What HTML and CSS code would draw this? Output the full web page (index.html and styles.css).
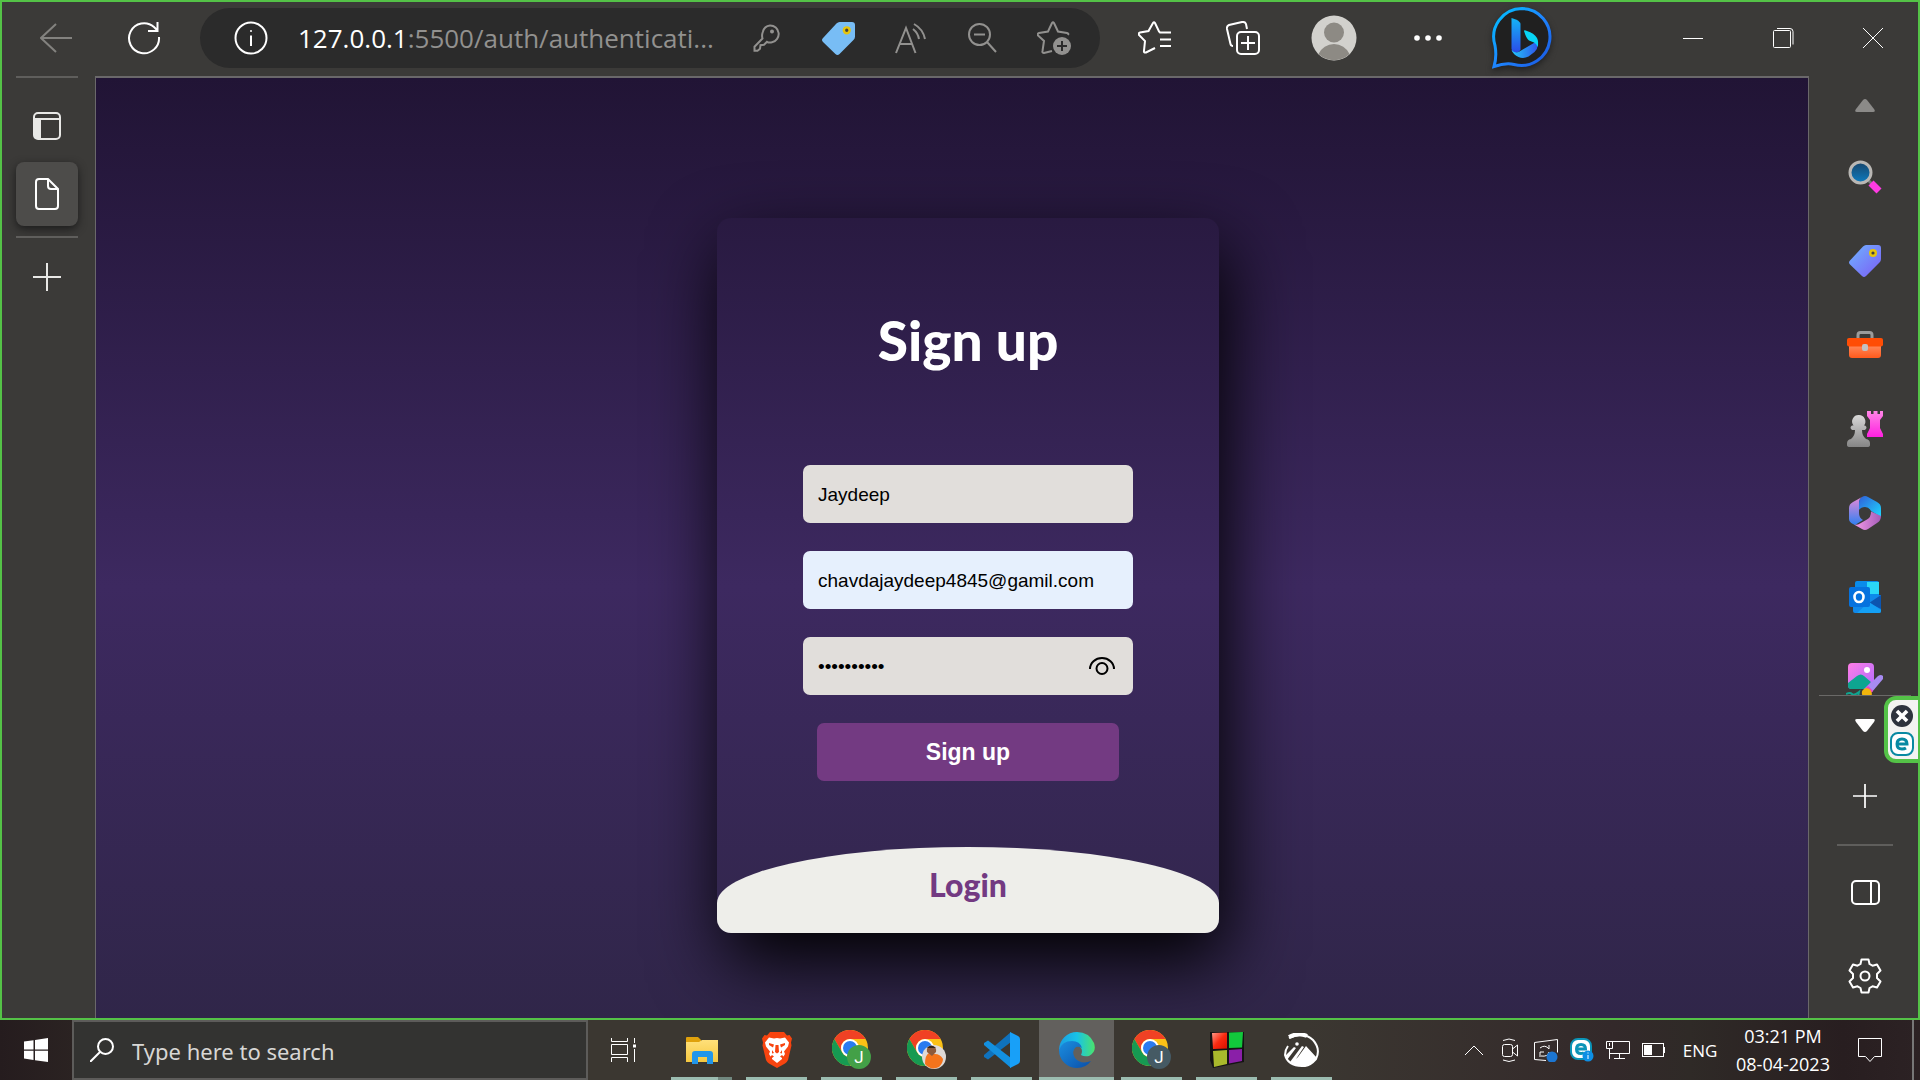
FILE: index.html
```html
<!DOCTYPE html>
<html lang="en">
<head>
<meta charset="utf-8">
<title>Sign up</title>
<link rel="stylesheet" href="styles.css">
</head>
<body>
<svg class="defs" aria-hidden="true">
  <defs>
    <linearGradient id="g-tag" x1="0" y1="0" x2="1" y2="1"><stop offset="0" stop-color="#6fb4ff"/><stop offset="1" stop-color="#7b5cf5"/></linearGradient>
    <linearGradient id="g-bing" x1="0" y1="0" x2="1" y2="1"><stop offset="0" stop-color="#00c3ff"/><stop offset=".5" stop-color="#1e86ff"/><stop offset="1" stop-color="#1a55e0"/></linearGradient>
    <linearGradient id="g-b1" x1="0" y1="0" x2="0" y2="1"><stop offset="0" stop-color="#14b5f5"/><stop offset="1" stop-color="#2b4ae8"/></linearGradient>
    <linearGradient id="g-b2" x1="0" y1="0" x2="1" y2="0"><stop offset="0" stop-color="#22c8fa"/><stop offset="1" stop-color="#2f55ea"/></linearGradient>
    <linearGradient id="g-glass" x1="0" y1="0" x2="0" y2="1"><stop offset="0" stop-color="#17456b"/><stop offset="1" stop-color="#0d7cc0"/></linearGradient>
    <linearGradient id="g-grey" x1="0" y1="0" x2="0" y2="1"><stop offset="0" stop-color="#d8d8d8"/><stop offset="1" stop-color="#858585"/></linearGradient>
    <linearGradient id="g-pink" x1="0" y1="0" x2="0" y2="1"><stop offset="0" stop-color="#ff86e6"/><stop offset="1" stop-color="#ff1fe0"/></linearGradient>
    <linearGradient id="g-box" x1="0" y1="0" x2="0" y2="1"><stop offset="0" stop-color="#ff8a5c"/><stop offset="1" stop-color="#ff5a1c"/></linearGradient>
    <linearGradient id="g-m1" x1="0" y1="0" x2="0" y2="1"><stop offset="0" stop-color="#e58ad8"/><stop offset="1" stop-color="#2f7ff0"/></linearGradient>
    <linearGradient id="g-m2" x1="0" y1="0" x2="1" y2="1"><stop offset="0" stop-color="#2f5fd8"/><stop offset="1" stop-color="#1fd8ff"/></linearGradient>
    <linearGradient id="g-m3" x1="0" y1="0" x2="1" y2="0"><stop offset="0" stop-color="#f59ae8"/><stop offset="1" stop-color="#a45cb8"/></linearGradient>
    <linearGradient id="g-pic" x1="0" y1="0" x2="1" y2="1"><stop offset="0" stop-color="#ff7de6"/><stop offset="1" stop-color="#b06cff"/></linearGradient>
    <linearGradient id="g-edge1" x1="0" y1="0" x2="1" y2="0"><stop offset="0" stop-color="#1b9de2"/><stop offset=".5" stop-color="#18c3e8"/><stop offset="1" stop-color="#4be36c"/></linearGradient>
    <linearGradient id="g-edge2" x1="0" y1="0" x2="1" y2="1"><stop offset="0" stop-color="#1b8ee0"/><stop offset="1" stop-color="#0b4fa8"/></linearGradient>
    <linearGradient id="g-fold" x1="0" y1="0" x2="0" y2="1"><stop offset="0" stop-color="#ffe07a"/><stop offset="1" stop-color="#f5c840"/></linearGradient>
    <linearGradient id="g-red" x1="0" y1="0" x2="1" y2="1"><stop offset="0" stop-color="#ff9a8a"/><stop offset=".5" stop-color="#fa2a10"/><stop offset="1" stop-color="#d81000"/></linearGradient>
    <symbol id="chrome" viewBox="0 0 36 36">
      <circle cx="18" cy="18" r="18" fill="#fbc116"/>
      <path d="M2.400 9A18 18 0 0 1 33.600 9H18a9 9 0 0 0-7.800 13.500Z" fill="#f04124"/>
      <path d="M2.400 9A18 18 0 0 0 18 36l7.800-13.500a9 9 0 0 1-15.600 0Z" fill="#169a52"/>
      <circle cx="18" cy="18" r="9" fill="#fff"/><circle cx="18" cy="18" r="7" fill="#2a7bf0"/>
    </symbol>
    <symbol id="tag" viewBox="0 0 32 32">
      <path d="M17 0h12a3 3 0 0 1 3 3v11q0 2-1.500 3.500L17 31q-2 2-4 0L1 19.500q-2-2 0-4L14 1.500Q15.500 0 17 0Z"/>
      <circle cx="24" cy="8" r="2.800" fill="#404040" stroke="#e5c40c" stroke-width="2.400"/>
    </symbol>
    <symbol id="plus" viewBox="0 0 28 28"><path d="M14 0v28M0 14h28" fill="none" stroke="currentColor" stroke-width="2"/></symbol>
  </defs>
</svg>

<div class="browser">
  <header class="toolbar">
    <nav class="nav">
      <button class="tool muted" aria-label="Back"><svg width="32" height="30" viewBox="0 0 32 30"><path d="M32 15H1M16 1 1 15l15 14"/></svg></button>
      <button class="tool" aria-label="Refresh"><svg width="34" height="34" viewBox="0 0 34 34"><path d="M32 16A15 15 0 1 1 27 6l3 3M30.500 1v9H21"/></svg></button>
    </nav>
    <div class="address">
      <svg class="info" width="34" height="34" viewBox="0 0 34 34"><circle cx="17" cy="17" r="15.500"/><path d="M17 14.500V25"/><circle class="solid" cx="17" cy="10" r="1"/></svg>
      <div class="url"><span class="host">127.0.0.1</span>:5500/auth/authenticati...</div>
      <div class="actions">
        <button class="tool muted" aria-label="Passwords"><svg width="27" height="28" viewBox="0 0 27 28"><path d="M17 1.500a8.500 8.500 0 0 1 2 16.800q-3 .7-5-.5l-3 3-3.500.4-.5 3.500-2.500 2H1.500v-4l8-8.200q-1-3 .3-6.500A8.500 8.500 0 0 1 17 1.500Z"/><circle cx="19" cy="7.500" r="1"/></svg></button>
        <button class="tool" aria-label="Shopping"><svg class="blue-tag" width="33" height="33"><use href="#tag"/></svg></button>
        <button class="tool muted" aria-label="Read aloud"><svg width="31" height="31" viewBox="0 0 31 31"><path d="m1 30 10-25 9.500 25M4.500 21h13M18 6q5 4 6 10M19 1q9 5 11 15"/></svg></button>
        <button class="tool muted" aria-label="Zoom out"><svg width="29" height="30" viewBox="0 0 29 30"><circle cx="11.500" cy="11.500" r="10.500"/><path d="M6 11.500h11M19 19l9 10"/></svg></button>
        <button class="tool muted" aria-label="Add to favourites"><svg width="34" height="34" viewBox="0 0 34 34"><path d="m15 30-8 2q-2 0-1.500-2L7 20l-6-5.500q-1-2 1-2.500l9-1.500L15 2q1-1.500 2 0l4 8.500 9 1.500q2 .5 1 2"/><circle class="solid" cx="25" cy="25" r="9"/><path class="cut" d="M25 20v10M20 25h10"/></svg></button>
      </div>
    </div>
    <div class="side-tools">
      <button class="tool" aria-label="Favourites"><svg width="34" height="34" viewBox="0 0 34 34"><path d="m17 27-9 4.500q-2.500.5-2-2L7 20l-6-6q-1-2 1-2.500l8.500-1.500L15 2q1-1.500 2 0l4 8.500 1 1H33M22 18.500h11M22 25h11"/></svg></button>
      <button class="tool" aria-label="Collections"><svg width="34" height="34" viewBox="0 0 34 34"><path d="M7 25q-2 0-2.500-2L1 8q-.5-3 2-4l13-3q3-.5 4 2l1 5"/><rect x="11" y="11" width="22" height="22" rx="4"/><path d="M22 15v14M15 22h14"/></svg></button>
    </div>
    <div class="profile-tools">
      <button class="tool" aria-label="Profile"><svg width="46" height="46" viewBox="0 0 46 46"><circle cx="23" cy="23" r="22.500" fill="#d2d1cd" stroke="none"/><circle cx="23" cy="17.500" r="10" fill="#8d8a84" stroke="none"/><path d="M7.500 39a17 17 0 0 1 31 0A22.500 22.500 0 0 1 7.500 39Z" fill="#8d8a84" stroke="none"/></svg></button>
      <button class="tool" aria-label="Settings and more"><svg width="28" height="6" viewBox="0 0 28 6"><circle class="solid" cx="3" cy="3" r="2.800"/><circle class="solid" cx="14" cy="3" r="2.800"/><circle class="solid" cx="25" cy="3" r="2.800"/></svg></button>
      <button class="tool" aria-label="Bing chat"><svg class="bing" width="60" height="62" viewBox="0 0 60 62"><path d="M30 1.500a28.500 28.500 0 1 1-8 56q-8-2-20 2 3-10 1-21A28.500 28.500 0 0 1 30 1.500Z" fill="#202020" stroke="url(#g-bing)" stroke-width="3"/><path d="M19.500 11q4 1 6.500 2.500 2.500 2 2.500 4V43q-3 4-7 2.500-2-1.500-2-4Z" fill="url(#g-b1)" stroke="none"/><path d="M19.500 43q3 3.500 7 2l18-10.500q3 6-2 10.500l-6 4.500q-5 2.500-10 .5-5-2-7-7Z" fill="url(#g-b2)" stroke="none"/><path d="M32 24q0-1.500 3 0 7 2 10 7 2 4 .5 9-.5-3-3.500-4.500l-5-2q-2.500-1.500-5-9.500Z" fill="#08d5f5" stroke="none"/></svg></button>
    </div>
    <div class="window-tools">
      <button class="tool" aria-label="Minimise"><svg width="20" height="1" viewBox="0 0 20 1"><path class="solid" d="M0 0h20v1H0z"/></svg></button>
      <button class="tool" aria-label="Restore"><svg width="21" height="21" viewBox="0 0 21 21"><rect x=".5" y="2.500" width="17" height="17" rx="1"/><path d="M4 .5h13q3 0 3 3v13"/></svg></button>
      <button class="tool" aria-label="Close"><svg width="20" height="20" viewBox="0 0 20 20"><path d="m0 0 20 20M20 0 0 20"/></svg></button>
    </div>
  </header>

  <div class="workspace">
    <aside class="tabs">
      <hr>
      <button class="tab" aria-label="Tab actions"><svg width="28" height="28" viewBox="0 0 28 28"><rect x="1" y="1" width="26" height="26" rx="4"/><path class="solid" d="M1 7h7v20H4q-3 0-3-3Z"/><path d="M1 7h26"/></svg></button>
      <button class="tab active" aria-label="Sign up tab"><svg width="24" height="32" viewBox="0 0 24 32"><path d="M4 1h9l10 10v17q0 3-3 3H4q-3 0-3-3V4q0-3 3-3ZM13 1v7q0 3 3 3h7"/></svg></button>
      <hr>
      <button class="tab" aria-label="New tab"><svg width="28" height="28"><use href="#plus"/></svg></button>
    </aside>

    <main class="page">
      <section class="card">
        <form class="signup">
          <h1>Sign up</h1>
          <input class="field" type="text" aria-label="User name" value="Jaydeep">
          <input class="field filled" type="email" aria-label="Email" value="chavdajaydeep4845@gamil.com">
          <div class="password">
            <input class="field" type="password" aria-label="Password" value="jaydeep123">
            <button class="reveal" type="button" aria-label="Show password"><svg width="26" height="18" viewBox="0 0 26 18"><path d="M1 12a12 11 0 0 1 24 0"/><circle cx="13" cy="11.500" r="5.500"/></svg></button>
          </div>
          <button class="submit" type="button">Sign up</button>
        </form>
        <div class="login"><button class="login-toggle" type="button">Login</button></div>
      </section>
    </main>

    <aside class="apps">
      <button class="scroll up" aria-label="Scroll up"><svg width="20" height="13" viewBox="0 0 20 13"><path class="solid" d="M10 0q1 0 2 1l7 9q2 3-1 3H2q-3 0-1-3l7-9q1-1 2-1Z"/></svg></button>
      <div class="app-list">
        <button aria-label="Search"><svg width="34" height="34" viewBox="0 0 34 34"><path d="m20 20 4 4" stroke="#777" stroke-width="3"/><circle cx="12.500" cy="12.500" r="10.500" fill="url(#g-glass)" stroke="#b9b7b4" stroke-width="3"/><path d="m23 23 8 8" stroke="#ff3be3" stroke-width="7"/></svg></button>
        <button aria-label="Shopping"><svg width="32" height="32" fill="url(#g-tag)"><use href="#tag"/></svg></button>
        <button aria-label="Tools"><svg width="36" height="28" viewBox="0 0 36 28"><path d="M11 8V4q0-2.500 2.500-2.500h9Q25 1.500 25 4v4" fill="none" stroke="#9b9b9b" stroke-width="3"/><path d="M2 14h32v10q0 3-3 3H5q-3 0-3-3Z" fill="url(#g-box)"/><rect y="7" width="36" height="8.500" rx="2" fill="#ff4d05"/><rect x="15" y="13" width="6" height="7" rx="2" fill="#c2c2c2"/></svg></button>
        <button aria-label="Games"><svg width="36" height="36" viewBox="0 0 36 36"><path d="M20 0h4v3h2.500V0h4v3H33V0h3v5l-3 4v8l3 6v3H20v-3l3-6V9l-3-4Z" fill="url(#g-pink)"/><path d="M12 4a6.500 6.500 0 0 1 5 10.500h1q3 2 0 4.500h-3q0 6 4 9 4 .5 4 4.500v1.500q0 2-3 2H3q-3 0-3-2v-1.500Q0 28.500 4 28q4-3 4-9H5q-3-2.500 0-4.500h1.500A6.500 6.500 0 0 1 12 4Z" fill="url(#g-grey)"/></svg></button>
        <button aria-label="Microsoft 365"><svg width="32" height="36" viewBox="0 0 32 36"><path d="M13 2 4 7Q0 9 0 13v11q0 3 4 5l2 1 8-5q-4-2-4-7V8q0-4 3-6Z" fill="url(#g-m1)"/><path d="M13 2q3-2 6 0l9 5q4 2 4 6v9l-10-6q-2-4-6-4t-6 3V8q0-4 3-6Z" fill="url(#g-m2)"/><path d="M32 21q0 5-4 7l-9 6q-3 2-6 0l-8-4.500q3 1 6-1l7-4q4-2 4-8Z" fill="url(#g-m3)"/></svg></button>
        <button aria-label="Outlook"><svg width="32" height="32" viewBox="0 0 32 32"><path d="M8 0h20q2 0 2 2v14H6V2q0-2 2-2Z" fill="#0a8ceb"/><path d="M18 1h12v12H18Z" fill="#2ad8f8"/><path d="M4 16l28-2v16q0 2-2 2H6q-2 0-2-2Z" fill="#1089ea"/><path d="M20 22 32 14v14Z" fill="#0c55b0"/><path d="m20 21 12 8v1q0 2-2 2H8Z" fill="#14a0f5"/><rect y="6" width="21" height="20" rx="2" fill="#0672de"/><ellipse cx="10" cy="16" rx="4.500" ry="5" fill="none" stroke="#fff" stroke-width="2.600"/></svg></button>
        <button aria-label="Drop"><svg width="38" height="38" viewBox="0 0 38 38"><rect x="2" y="1" width="26" height="26" rx="4" fill="url(#g-pic)"/><circle cx="21" cy="8" r="3" fill="#fff"/><path d="M2 21 11 14q4-3 7 0l7 6-7 7H5q-3 0-3-3Z" fill="#0ea590"/><path d="M0 32q4-2 6 0t7-2l-1 5" fill="none" stroke="#0ea590" stroke-width="2"/><path d="m21 25 11-11q3-2 5 0v3L26 30Z" fill="#a78bf2"/><path d="m22 24 5 5-3 3-5-5Z" fill="#f23fc0"/><path d="M20 26q5 0 6 6-2 6-11 6 2-2 1-6t4-6Z" fill="#f2b50c"/></svg></button>
      </div>
      <button class="scroll down" aria-label="Scroll down"><svg width="20" height="13" viewBox="0 0 20 13"><path class="solid" d="M10 13q-1 0-2-1L1 3q-2-3 1-3h16q3 0 1 3l-7 9q-1 1-2 1Z"/></svg></button>
      <button class="side-action" aria-label="Customise"><svg width="24" height="24"><use href="#plus"/></svg></button>
      <hr>
      <button class="side-action" aria-label="Hide sidebar"><svg width="29" height="25" viewBox="0 0 29 25"><rect x="1" y="1" width="27" height="23" rx="4"/><path d="M20 1v23"/></svg></button>
      <button class="side-action" aria-label="Settings"><svg width="34" height="36" viewBox="0 0 34 36"><circle cx="17" cy="18" r="4.500"/><path d="M13.500 1.500h7l1 4.500 3 1.700 4.500-1.200 3.500 6-3.500 3.500v4l3.500 3.500-3.500 6-4.500-1.200-3 1.700-1 4.500h-7l-1-4.500-3-1.700L5 29.500l-3.500-6L5 20v-4l-3.500-3.500 3.500-6 4.500 1.200 3-1.700Z" stroke-linejoin="round"/></svg></button>
    </aside>
  </div>

  <div class="safe-badge">
    <svg width="22" height="22" viewBox="0 0 24 24"><circle cx="12" cy="12" r="12" fill="#2e333d"/><path d="m6.500 6.500 11 11m0-11-11 11" stroke="#fff" stroke-width="4"/></svg>
    <svg width="24" height="24" viewBox="0 0 24 24"><rect x="1" y="1" width="22" height="22" rx="7" fill="#fff" stroke="#0889a2" stroke-width="2"/><path d="M7 12h10q0-5-5-5t-5 5 5 5q2.500 0 4-1" fill="none" stroke="#0889a2" stroke-width="3"/></svg>
  </div>
</div>

<footer class="taskbar">
  <button class="start" aria-label="Start"><svg width="24" height="24" viewBox="0 0 24 24"><path fill="#fff" d="m0 3.500 9.500-1.300v9.300H0Zm11-1.500L24 0v11.500H11ZM0 12.800h9.500v9.100L0 20.500Zm11 0h13V24l-13-1.800Z"/></svg></button>
  <label class="search">
    <svg width="24" height="24" viewBox="0 0 24 24"><circle cx="15.500" cy="8.500" r="7.500"/><path d="M10 14 0 24"/></svg>
    <input type="text" placeholder="Type here to search">
  </label>
  <button class="task-view" aria-label="Task view"><svg width="26" height="24" viewBox="0 0 26 24"><path d="M.5 0v3.500h16V0M.5 24v-4.500h16V24M.5 6.500h16v10H.5ZM23.500 0v5M23.500 11v13"/><path class="solid" d="M22 6.500h3v3h-3z"/></svg></button>
  <div class="running">
    <button class="task grouped" aria-label="File Explorer"><svg width="32" height="27" viewBox="0 0 32 27"><path d="M0 1q0-1 1-1h11l3 3v4H0Z" fill="#dfa10c"/><path d="M0 5h13l3-2h16v22H0Z" fill="url(#g-fold)"/><path d="M6 27V17q0-3 3-3h15q3 0 3 3v10h-6v-7h-9v7Z" fill="#2196ea"/></svg></button>
    <button class="task" aria-label="Brave"><svg width="30" height="36" viewBox="0 0 30 36"><path d="m8 0h14l3 3.500 2.500-.5L30 6.500l-1 4 .5 3L26 28q-1 2-3 3.500L15 36l-8-4.500Q5 30 4 28L.5 13.500l.5-3-1-4L2.500 3 5 3.500Z" fill="#f8440f"/><path d="m15 6 3 .5L23 5.500l4 5-1 4-4 5 1 2.500-1.500 2.500L20 23l-2 1.500 2 1.500v1l-5 4-5-4v-1l2-1.500L10 23l-1.500 1.500L7 22l1-2.500-4-5-1-4 4-5 5 1Z" fill="#fff"/><path d="m7 11 5 1.500-1 3L7 13ZM23 11l-5 1.500 1 3 4-2.500ZM13.500 13h3l.5 7-2 1.500-2-1.500ZM10 18l2 3-2 .5ZM20 18l-2 3 2 .5Z" fill="#f8440f"/></svg></button>
    <button class="task" aria-label="Chrome, profile J"><svg width="40" height="40" viewBox="0 0 40 40"><use href="#chrome" width="36" height="36"/><circle cx="27" cy="27" r="12" fill="#43a047"/><text class="badge" x="27" y="33">J</text></svg></button>
    <button class="task" aria-label="Chrome, second profile"><svg width="40" height="40" viewBox="0 0 40 40"><use href="#chrome" width="36" height="36"/><circle cx="27" cy="27" r="12" fill="#ded9d6"/><path d="M18 34q0-9 4-11l6 1q5 0 8 5 0 4-4 8-8 4-14-3Z" fill="#f5741c"/><path d="M20 22q-1-7 5-6 5 1 4 6l-4 4Z" fill="#8d5a3c"/><path d="M20 18q4-5 9 0Z" fill="#33241d"/></svg></button>
    <button class="task" aria-label="Visual Studio Code"><svg width="36" height="36" viewBox="0 0 36 36"><path d="M27 0v10L4 27.500 0 25v-2Z" fill="#0f72bd"/><path d="M0 13v-2l4-2.500L27 26v10Z" fill="#1390e0"/><path d="m26 0 8 4q2 1 2 3v22q0 2-2 3l-8 4Z" fill="#18a0f8"/></svg></button>
    <button class="task current" aria-label="Microsoft Edge"><svg width="36" height="36" viewBox="0 0 36 36"><path d="M0 18A18 18 0 0 1 18 0q12 0 17 11 3 9-5 13-5 1-8-1 2-4 0-7Q14 6 0 18Z" fill="url(#g-edge1)"/><path d="M0 18Q3 9 13 9q8 0 10 7-3-2-6-1-5 4-1 11 6 7 16 3-5 7-14 7A18 18 0 0 1 0 18Z" fill="url(#g-edge2)"/></svg></button>
    <button class="task" aria-label="Chrome, work profile"><svg width="40" height="40" viewBox="0 0 40 40"><use href="#chrome" width="36" height="36"/><circle cx="27" cy="27" r="12" fill="#455a64"/><text class="badge" x="27" y="33">J</text></svg></button>
    <button class="task" aria-label="Colour blocks"><svg width="34" height="36" viewBox="0 0 34 36"><path d="M0 0h34v30L3 36 0 28Z" fill="#141414"/><path d="m2 1 15-.5v16L3 17Z" fill="url(#g-red)"/><path d="M19 .5 33 0l-1 15.500-13 .5Z" fill="#12c83c"/><path d="m3 19 14-1v14L4 35Z" fill="#a9b92c"/><path d="m19 18 13-1v12l-13 2.500Z" fill="#8a1fa8"/></svg></button>
    <button class="task" aria-label="Image viewer"><svg width="36" height="34" viewBox="0 0 36 34"><path d="M5 5Q20-2 29 7q8 9 3 19-7 8-14 7-14 0-17-11 0-5 3-9" fill="none" stroke="#fff" stroke-width="2"/><path d="M5 4q9-5 18-1" fill="none" stroke="#fff" stroke-width="4"/><path d="m14 24 8-11 11 12q-6 8-15 8-8 0-12-4l12-16 2 1-8 12Z" fill="#fff"/><path d="m1 23 9-9 2 1-9 12Z" fill="#fff"/><circle cx="13" cy="11" r="1.800" fill="#fff"/></svg></button>
  </div>
  <div class="tray">
    <button aria-label="Show hidden icons"><svg width="20" height="11" viewBox="0 0 20 11"><path d="m1 10 9-9 9 9"/></svg></button>
    <button aria-label="Meet now"><svg width="18" height="24" viewBox="0 0 18 24"><rect x="1.500" y="6.500" width="10" height="12" rx="2"/><path d="m11.500 11 5-4v11l-5-4M2 2.500q6-3 12 0M2 22q6 3 12 0"/></svg></button>
    <button aria-label="Updates"><svg width="26" height="24" viewBox="0 0 26 24"><path d="M13 22.500 1.500 21.500v-17l23-3v13M7 10q5-4 9 1V7M7 19v-5h4M16 14q-1 5-8 4"/><circle cx="19" cy="19" r="5.500" fill="#1c76d2" stroke="none"/></svg></button>
    <button aria-label="Security"><svg width="24" height="24" viewBox="0 0 24 24"><rect x="1" y="1" width="20" height="20" rx="7" fill="#fff" stroke="#0b94b8" stroke-width="2"/><path d="M6.500 11h9q0-4.500-4.500-4.500T6.500 11t4.500 4.500q2 0 3-1" stroke="#0b94b8" stroke-width="3"/><circle cx="18" cy="18" r="5.500" fill="#0d8fe5" stroke="none"/><path d="M18 17v4M18 14.500v1"/></svg></button>
    <button aria-label="Network"><svg width="26" height="20" viewBox="0 0 26 20"><path d="M7 1.500h17.500v12H4M1.500 1.500h6v7h-6ZM4.500 9v10M14.500 14v4M9 18.500h11M4.500 3v3"/></svg></button>
    <button aria-label="Battery"><svg width="24" height="14" viewBox="0 0 24 14"><rect x=".5" y=".5" width="21" height="13"/><path class="solid" d="M2 2h8v10H2zM22 4h1v6h-1z"/></svg></button>
    <button class="language">ENG</button>
    <button class="clock"><span>03:21 PM</span><span>08-04-2023</span></button>
    <button class="notices" aria-label="Notifications"><svg width="26" height="24" viewBox="0 0 26 24"><path d="M1.500.5h23v18h-7l-4.500 5-4.500-5h-7Z"/></svg></button>
    <span class="desktop-edge"></span>
  </div>
</footer>
</body>
</html>
```

FILE: styles.css
```css
* { box-sizing: border-box; }

body {
  margin: 0;
  height: 100vh;
  display: flex;
  flex-direction: column;
  overflow: hidden;
  font-family: "Open Sans", "Noto Sans", sans-serif;
  color: #fff;
  background: #3b3a38;
}

.defs { position: absolute; width: 0; height: 0; }

button {
  margin: 0;
  padding: 0;
  border: 0;
  background: none;
  color: inherit;
  font: inherit;
  display: flex;
  align-items: center;
  justify-content: center;
}

svg { display: block; flex: none; }
hr { margin: 0; border: 0; height: 2px; background: #5f5e5c; flex: none; }
.solid { fill: currentColor; stroke: none; }

/* Browser window */
.browser {
  position: relative;
  flex: 1;
  min-height: 0;
  display: flex;
  flex-direction: column;
  border: 2px solid #54c247;
  background: #3b3a38;
}

.toolbar {
  display: flex;
  align-items: center;
  height: 74px;
  padding-bottom: 2px;
  flex: none;
}
.tool { height: 60px; }
.tool svg, .info, .task-view svg, .search svg, .tray svg, .tab svg, .side-action svg, .reveal svg {
  fill: none;
  stroke: currentColor;
  stroke-width: 2;
}
.tool svg .solid, .info .solid, .tray svg .solid, .tab svg .solid, .task-view svg .solid { fill: currentColor; stroke: none; }
.muted { color: #92918f; }
.cut { stroke: #2b2b2b; }

.nav, .side-tools, .profile-tools, .window-tools, .actions { display: flex; }
.nav { padding: 0 12px 0 10px; }
.nav .tool, .side-tools .tool { width: 88px; }
.nav .muted { color: #83827f; }
.side-tools { margin-left: 11px; }
.profile-tools .tool { width: 94px; }
.window-tools { margin-left: auto; }
.window-tools .tool { width: 90px; }
.window-tools .tool svg, .tray svg, .task-view svg { stroke-width: 1; }
.tool .blue-tag { fill: #78bdf5; stroke: none; }
.bing { filter: drop-shadow(0 3px 3px #222); }

.address {
  flex: 0 1 900px;
  min-width: 0;
  display: flex;
  align-items: center;
  height: 60px;
  padding: 0 10px 0 34px;
  border-radius: 30px;
  background: #2b2b2b;
}
.url {
  flex: 1;
  min-width: 0;
  margin-left: 30px;
  overflow: hidden;
  white-space: nowrap;
  font-size: 26px;
  line-height: 36px;
  color: #92918f;
}
.host { color: #fff; }
.actions .tool { width: 72px; }

.workspace {
  flex: 1;
  min-height: 0;
  display: grid;
  grid-template-columns: 93px minmax(0, 1fr) 109px;
  grid-template-rows: minmax(0, 1fr);
}

.tabs { display: flex; flex-direction: column; padding: 0 17px 0 14px; }
.tab { height: 64px; color: #e8e8e6; }
.tabs hr + .tab { margin-top: 16px; }
.tab + .tab { margin-top: 4px; }
.tab.active {
  margin-bottom: 10px;
  border-radius: 8px;
  background: #4d4c4a;
  color: #fff;
  box-shadow: 0 3px 8px #1c1c1c;
}
.tabs hr + .tab:last-child { margin-top: 7px; }

/* Web page */
.page {
  display: flex;
  justify-content: center;
  align-items: flex-start;
  padding: 140px 0 0 32px;
  overflow: hidden;
  border: 1px solid #6a686a;
  border-width: 2px 1px 0;
  background: linear-gradient(#211435, #3d2960 54%, #302649);
}
.card {
  width: 502px;
  overflow: hidden;
  border-radius: 14px;
  box-shadow: 7px 29px 72px #000;
}
.signup {
  display: flex;
  flex-direction: column;
  align-items: center;
  gap: 28px;
  padding: 86px 86px 66px;
}
h1 {
  margin: 0 0 61px;
  font: 900 55px/72px Lato, sans-serif;
}
.field {
  width: 100%;
  height: 58px;
  padding: 1px 15px 0;
  border: 0;
  border-radius: 7px;
  background: #e1dedb;
  color: #000;
  font: 19px "Liberation Sans", sans-serif;
}
.filled { background: #e6f0fd; }
.password { position: relative; width: 100%; display: flex; }
.password .field { padding-right: 60px; }
.reveal { position: absolute; right: 18px; top: 14px; height: 30px; color: #000; }
.submit {
  width: 302px;
  height: 58px;
  border-radius: 7px;
  background: #733a82;
  font: bold 23px "Liberation Sans", sans-serif;
}
.login {
  display: flex;
  justify-content: center;
  align-items: flex-start;
  height: 86px;
  padding-top: 18px;
  background: #eeeeea;
  border-radius: 50% 50% 0 0 / 56px 56px 0 0;
}
.login-toggle { color: #733a82; font: 900 32px/40px Lato, sans-serif; }

/* Right sidebar */
.apps { display: flex; flex-direction: column; align-items: center; padding-left: 3px; }
.apps button { width: 100%; flex: none; }
.up { height: 59px; color: #8b8a88; }
.app-list {
  flex: 1;
  min-height: 0;
  width: 92px;
  overflow: hidden;
  border-bottom: 1px solid #6a6967;
}
.app-list button { height: 84px; }
.down { height: 58px; }
.side-action { height: 84px; }
.apps hr { width: 56px; margin: 6px 0 4px; }

.safe-badge {
  position: absolute;
  right: -2px;
  top: 694px;
  display: flex;
  flex-direction: column;
  align-items: center;
  gap: 5px;
  padding: 5px 4px 3px 2px;
  border: 4px solid #54c247;
  border-right-width: 2px;
  border-radius: 12px 0 0 12px;
  background: #f3f3f1;
}

/* Taskbar */
.taskbar {
  flex: none;
  height: 60px;
  display: flex;
  background: linear-gradient(90deg, #251c1e 0, #2b2322 4%, #3b3731 30%, #3b3731 68%, #33292a 84%, #2f2a27 88%, #281e20 96%, #2c2224 100%);
}
.start, .task-view { width: 72px; flex: none; }
.search {
  flex: 0 1 516px;
  display: flex;
  align-items: center;
  gap: 18px;
  padding: 0 16px;
  border: 2px solid #5d5c5a;
  background: #333331;
}
.search input {
  flex: 1;
  min-width: 0;
  padding: 2px 0 0;
  border: 0;
  background: none;
  color: #fff;
  font: 22px/32px "Noto Sans", sans-serif;
}
.search input::placeholder { color: #d8d7d5; opacity: 1; }
.running { display: flex; margin-left: 4px; }
.task {
  width: 75px;
  padding: 0 7px;
  background: linear-gradient(#9bbcb0, #9bbcb0) center bottom / 61px 3px no-repeat;
}
.grouped {
  background: linear-gradient(90deg, #9bbcb0 47px, #71887f 47px) center bottom / 61px 3px no-repeat;
}
.current { background: linear-gradient(#9bbcb0, #9bbcb0) bottom / 100% 3px no-repeat #62605d; }
.badge { fill: #fff; font: 17px Roboto, sans-serif; text-anchor: middle; }

.tray { display: flex; margin-left: auto; }
.tray button { width: 36px; }
.tray .language { width: 56px; font-size: 17px; }
.tray .clock { width: 110px; flex-direction: column; font-size: 18px; line-height: 28px; }
.tray .notices { width: 64px; }
.desktop-edge { width: 2px; margin: 0 6px 0 10px; background: #777; }
```
